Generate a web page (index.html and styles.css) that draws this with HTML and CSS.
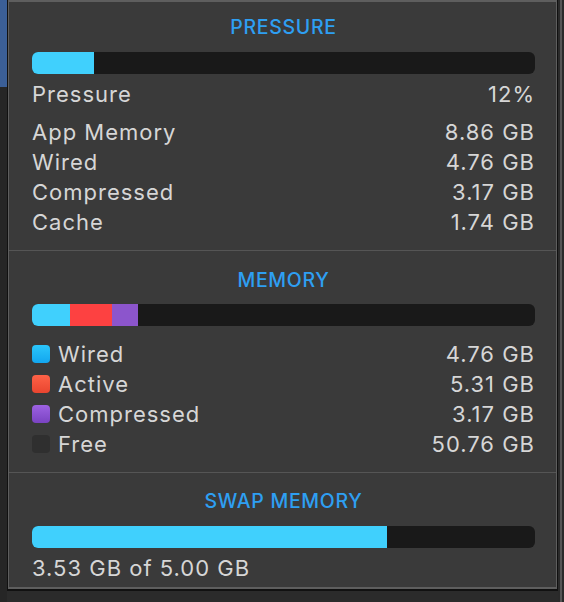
FILE: index.html
```html
<!DOCTYPE html>
<html>
<head>
<meta charset="utf-8">
<link rel="stylesheet" href="styles.css">
</head>
<body>
<div class="screen">
  <div class="left-strip"><div class="left-blue"></div></div>
  <div class="frame">
    <div class="panel">
      <section class="section first">
        <div class="title">PRESSURE</div>
        <div class="bar"><div class="seg cyan" style="width:12.35%"></div></div>
        <div class="row"><span>Pressure</span><span>12%</span></div>
        <div class="rows">
          <div class="row"><span>App Memory</span><span>8.86 GB</span></div>
          <div class="row"><span>Wired</span><span>4.76 GB</span></div>
          <div class="row"><span>Compressed</span><span>3.17 GB</span></div>
          <div class="row"><span>Cache</span><span>1.74 GB</span></div>
        </div>
      </section>
      <section class="section second">
        <div class="title">MEMORY</div>
        <div class="bar">
          <div class="seg cyan" style="width:7.6%"></div>
          <div class="seg red" style="width:8.35%"></div>
          <div class="seg purple" style="width:5.2%"></div>
        </div>
        <div class="legend">
          <div class="row"><span class="label"><i class="sw sw-wired"></i>Wired</span><span>4.76 GB</span></div>
          <div class="row"><span class="label"><i class="sw sw-active"></i>Active</span><span>5.31 GB</span></div>
          <div class="row"><span class="label"><i class="sw sw-comp"></i>Compressed</span><span>3.17 GB</span></div>
          <div class="row"><span class="label"><i class="sw sw-free"></i>Free</span><span>50.76 GB</span></div>
        </div>
      </section>
      <section class="section third">
        <div class="title">SWAP MEMORY</div>
        <div class="bar"><div class="seg cyan" style="width:70.5%"></div></div>
        <div class="row"><span>3.53 GB of 5.00 GB</span></div>
      </section>
    </div>
  </div>
  <div class="right-strip"><div class="rline"></div></div>
</div>
</body>
</html>
```

FILE: styles.css
```css
html, body {
  margin: 0;
  padding: 0;
  background: #2b2b2b;
}
body {
  font-family: Inter, "Noto Sans", sans-serif;
  color: #d6d6d6;
  width: 564px;
  height: 602px;
  overflow: hidden;
}
.screen {
  display: flex;
  height: 602px;
  align-items: flex-start;
}
.left-strip {
  width: 7px;
  height: 602px;
  background: #262626;
  flex: none;
}
.left-blue {
  height: 87px;
  background: #3b5f97;
}
.frame {
  width: 549px;
  flex: none;
  border-left: 1px solid #111;
  border-right: 1px solid #111;
  border-bottom: 2px solid #111;
}
.panel {
  background: #3a3a3a;
  border: 1px solid #5e5e5e;
  border-top-width: 2px;
  border-bottom-width: 2px;
}
.right-strip {
  flex: 1;
  height: 602px;
  background: #2a2a2a;
  display: flex;
  padding-left: 2px;
}
.rline {
  width: 2px;
  height: 602px;
  background: #555;
}
.section {
  padding: 0 21px 0 23px;
}
.section + .section {
  border-top: 1px solid #555;
}
.first { padding-top: 13px; padding-bottom: 13px; }
.second { padding-top: 17px; padding-bottom: 13px; }
.third { padding-top: 16px; padding-bottom: 4px; }
.title {
  height: 24px;
  line-height: 24px;
  text-align: center;
  color: #2e9ff2;
  font-size: 19.5px;
  font-weight: 500;
  letter-spacing: 0.7px;
}
.bar {
  height: 22px;
  background: #191919;
  border-radius: 6px;
  overflow: hidden;
  display: flex;
  margin-top: 13px;
}
.second .bar { margin-top: 12px; }
.seg { height: 100%; }
.cyan { background: #40d0fd; }
.red { background: #fd4141; }
.purple { background: #8c55cc; }
.row {
  height: 30px;
  display: flex;
  justify-content: space-between;
  align-items: center;
  font-size: 22px;
  letter-spacing: 1px;
}
.bar + .row { margin-top: 5px; }
.rows { margin-top: 8px; }
.legend { margin-top: 13px; }
.label {
  display: flex;
  align-items: center;
  gap: 8px;
}
.sw {
  display: block;
  width: 18px;
  height: 18px;
  border-radius: 4px;
}
.sw-wired { background: linear-gradient(#2bc6fb, #12a6ef); }
.sw-active { background: linear-gradient(#fd6247, #e9452f); }
.sw-comp { background: linear-gradient(#9d62e2, #7a43c2); }
.sw-free { background: #2f2f2f; }
```
